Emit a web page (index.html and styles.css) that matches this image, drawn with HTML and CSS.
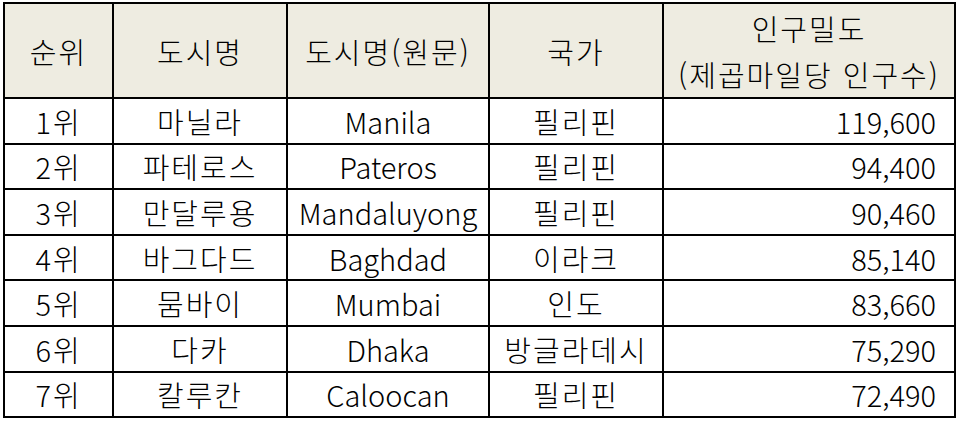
FILE: index.html
```html
<!DOCTYPE html>
<html lang="ko">
<head>
<meta charset="utf-8">
<link rel="stylesheet" href="styles.css">
</head>
<body>
<table class="rank">
  <colgroup>
    <col class="c1"><col class="c2"><col class="c3"><col class="c4"><col class="c5">
  </colgroup>
  <thead>
    <tr>
      <th>순위</th>
      <th>도시명</th>
      <th>도시명(원문)</th>
      <th>국가</th>
      <th class="two">인구밀도<br>(제곱마일당 인구수)</th>
    </tr>
  </thead>
  <tbody>
    <tr><td>1위</td><td>마닐라</td><td class="en">Manila</td><td>필리핀</td><td class="num">119,600</td></tr>
    <tr><td>2위</td><td>파테로스</td><td class="en">Pateros</td><td>필리핀</td><td class="num">94,400</td></tr>
    <tr><td>3위</td><td>만달루용</td><td class="en">Mandaluyong</td><td>필리핀</td><td class="num">90,460</td></tr>
    <tr><td>4위</td><td>바그다드</td><td class="en">Baghdad</td><td>이라크</td><td class="num">85,140</td></tr>
    <tr><td>5위</td><td>뭄바이</td><td class="en">Mumbai</td><td>인도</td><td class="num">83,660</td></tr>
    <tr><td>6위</td><td>다카</td><td class="en">Dhaka</td><td>방글라데시</td><td class="num">75,290</td></tr>
    <tr><td>7위</td><td>칼루칸</td><td class="en">Caloocan</td><td>필리핀</td><td class="num">72,490</td></tr>
  </tbody>
</table>
</body>
</html>
```

FILE: styles.css
```css
html, body {
  margin: 0;
  background: #ffffff;
}
body {
  padding: 2px 0 0 3px;
  font-family: "Noto Sans CJK KR", sans-serif;
  color: #000;
}
.rank {
  border-collapse: collapse;
  table-layout: fixed;
  width: 951px;
  font-size: 29px;
  font-weight: 300;
}
.c1 { width: 109px; }
.c2 { width: 174px; }
.c3 { width: 202px; }
.c4 { width: 174px; }
.c5 { width: 292px; }
.rank th, .rank td {
  border: 2px solid #000;
  padding: 0;
  text-align: center;
  vertical-align: middle;
  font-weight: 300;
  white-space: nowrap;
  line-height: 30px;
  letter-spacing: 2px;
}
.rank th {
  background: #eeece1;
  height: 93px;
}
.rank th.two {
  line-height: 46px;
}
.rank td {
  height: 43.6px;
}
.rank td.en {
  letter-spacing: 0;
}
.rank td.num {
  letter-spacing: 0;
  text-align: right;
  padding-right: 18px;
}
```
